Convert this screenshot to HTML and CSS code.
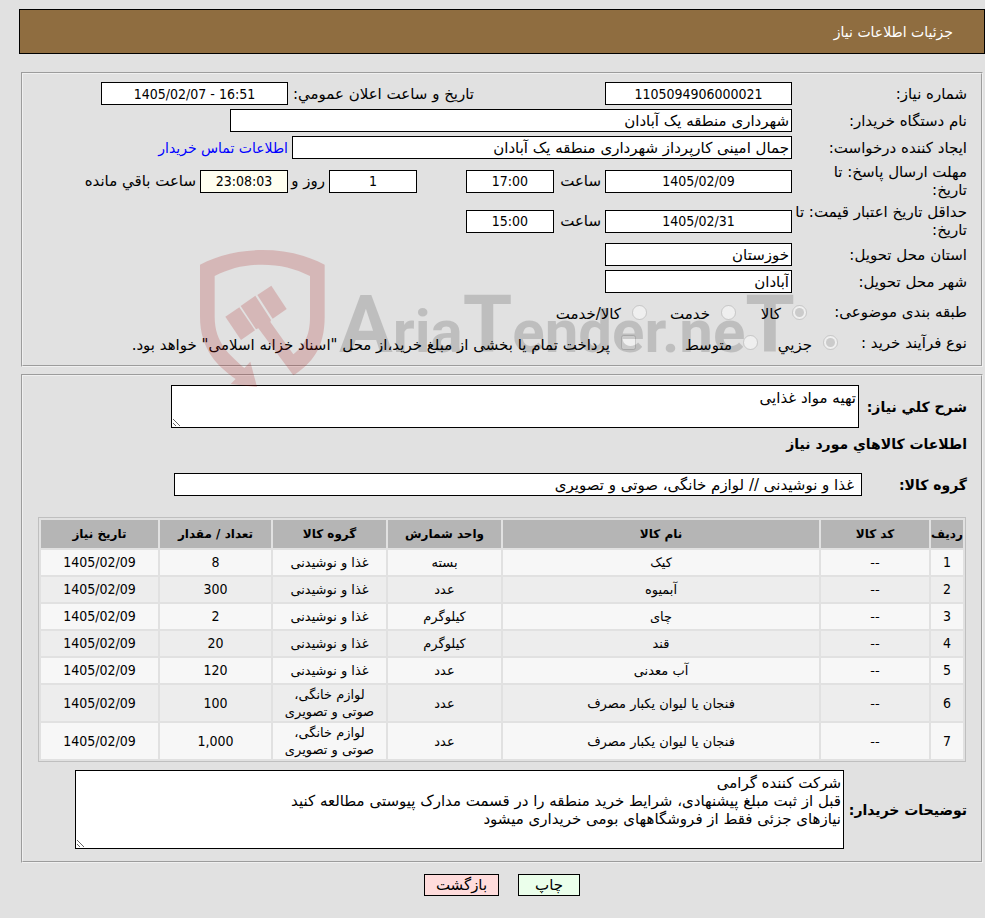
FILE: index.html
```html
<!DOCTYPE html>
<html lang="fa" dir="rtl">
<head>
    <meta charset="UTF-8">
    <title>جزئیات اطلاعات نیاز</title>
    <link rel="stylesheet" href="styles.css">
</head>
<body>
    <h1 class="header">جزئیات اطلاعات نیاز</h1>

    <form>
    <div class="panel info">
        <div class="row">
            <label class="title" for="reqNo">شماره نیاز:</label>
            <input class="box date" id="reqNo" type="text" value="1105094906000021" readonly>
            <label class="publicLabel" for="publicDate">تاریخ و ساعت اعلان عمومي:</label>
            <input class="box date" id="publicDate" type="text" dir="ltr" value="1405/02/07 - 16:51" readonly>
        </div>
        <div class="row">
            <label class="title" for="org">نام دستگاه خریدار:</label>
            <input class="box org" id="org" type="text" value="شهرداری منطقه یک آبادان" readonly>
        </div>
        <div class="row">
            <label class="title" for="creator">ایجاد کننده درخواست:</label>
            <input class="box creator" id="creator" type="text" value="جمال امینی کارپرداز شهرداری منطقه یک آبادان" readonly>
            <a class="contact" href="#">اطلاعات تماس خریدار</a>
        </div>
        <div class="row tall">
            <label class="title" for="replyDate">مهلت ارسال پاسخ: تا<br>تاریخ:</label>
            <input class="box date" id="replyDate" type="text" value="1405/02/09" readonly>
            <label class="hourLabel" for="replyHour">ساعت</label>
            <input class="box hour" id="replyHour" type="text" value="17:00" readonly>
            <input class="box hour days" id="days" type="text" value="1" readonly>
            <label class="dayLabel" for="days">روز و</label>
            <input class="box hour remain" id="remain" type="text" value="23:08:03" readonly>
            <label class="remainLabel" for="remain">ساعت باقي مانده</label>
        </div>
        <div class="row tall">
            <label class="title" for="priceDate">حداقل تاریخ اعتبار قیمت: تا<br>تاریخ:</label>
            <input class="box date" id="priceDate" type="text" value="1405/02/31" readonly>
            <label class="hourLabel" for="priceHour">ساعت</label>
            <input class="box hour" id="priceHour" type="text" value="15:00" readonly>
        </div>
        <div class="row">
            <label class="title" for="province">استان محل تحویل:</label>
            <input class="box place" id="province" type="text" value="خوزستان" readonly>
        </div>
        <div class="row">
            <label class="title" for="city">شهر محل تحویل:</label>
            <input class="box place" id="city" type="text" value="آبادان" readonly>
        </div>
        <div class="row options kind">
            <span class="title">طبقه بندی موضوعی:</span>
            <label class="option first"><input type="radio" name="kind" checked disabled><span>کالا</span></label>
            <label class="option second"><input type="radio" name="kind" disabled><span>خدمت</span></label>
            <label class="option"><input type="radio" name="kind" disabled><span>کالا/خدمت</span></label>
        </div>
        <div class="row options process">
            <span class="title">نوع فرآیند خرید :</span>
            <label class="option first"><input type="radio" name="process" checked disabled><span>جزیي</span></label>
            <label class="option second"><input type="radio" name="process" disabled><span>متوسط</span></label>
            <label class="option"><input type="checkbox" disabled><span>پرداخت تمام یا بخشی از مبلغ خرید،از محل "اسناد خزانه اسلامی" خواهد بود.</span></label>
        </div>

        <div class="watermark" dir="ltr" aria-hidden="true">
            <svg class="shield" viewBox="60 90 375 411">
                <path d="M60 134C120 104 180 90 247 90C315 90 375 104 434 134V290C434 385 395 430 340 466L235 325L228 328L182 258L226 227L273 300L271 306L340 403C372 375 390 350 390 290V168C345 145 300 134 247 134C195 134 150 145 104 168V290C104 370 150 405 193 444L211 425L231 501L152 492L167 477C115 440 60 390 60 290Z"/>
                <path d="M136 290L178 262L225 331L183 360Z"/>
                <path d="M232 225L274 197L320 267L278 296Z"/>
            </svg>
            <span class="brand"><span class="cap">A</span>ria<span class="cap">T</span>ender.ne<span class="cap">T</span></span>
        </div>
    </div>

    <div class="panel goods">
        <div class="line">
            <label class="strong summaryLabel" for="summary">شرح کلي نیاز:</label>
            <textarea class="box summary" id="summary" readonly>تهیه مواد غذایی</textarea>
        </div>
        <h2 class="strong">اطلاعات کالاهاي مورد نیاز</h2>
        <div class="line">
            <label class="strong groupLabel" for="group">گروه کالا:</label>
            <input class="box group" id="group" type="text" value="غذا و نوشیدنی // لوازم خانگی، صوتی و تصویری" readonly>
        </div>
        <table class="items">
            <colgroup>
                <col class="cRow"><col class="cCode"><col class="cName"><col class="cUnit"><col class="cUnit"><col class="cCount"><col class="cDate">
            </colgroup>
            <thead>
                <tr><th>ردیف</th><th>کد کالا</th><th>نام کالا</th><th>واحد شمارش</th><th>گروه کالا</th><th>تعداد / مقدار</th><th>تاریخ نیاز</th></tr>
            </thead>
            <tbody>
                <tr><td class="num">1</td><td>--</td><td>کیک</td><td>بسته</td><td>غذا و نوشیدنی</td><td class="num">8</td><td class="num">1405/02/09</td></tr>
                <tr><td class="num">2</td><td>--</td><td>آبمیوه</td><td>عدد</td><td>غذا و نوشیدنی</td><td class="num">300</td><td class="num">1405/02/09</td></tr>
                <tr><td class="num">3</td><td>--</td><td>چای</td><td>کیلوگرم</td><td>غذا و نوشیدنی</td><td class="num">2</td><td class="num">1405/02/09</td></tr>
                <tr><td class="num">4</td><td>--</td><td>قند</td><td>کیلوگرم</td><td>غذا و نوشیدنی</td><td class="num">20</td><td class="num">1405/02/09</td></tr>
                <tr><td class="num">5</td><td>--</td><td>آب معدنی</td><td>عدد</td><td>غذا و نوشیدنی</td><td class="num">120</td><td class="num">1405/02/09</td></tr>
                <tr><td class="num">6</td><td>--</td><td>فنجان یا لیوان یکبار مصرف</td><td>عدد</td><td>لوازم خانگی، صوتی و تصویری</td><td class="num">100</td><td class="num">1405/02/09</td></tr>
                <tr><td class="num">7</td><td>--</td><td>فنجان یا لیوان یکبار مصرف</td><td>عدد</td><td>لوازم خانگی، صوتی و تصویری</td><td class="num">1,000</td><td class="num">1405/02/09</td></tr>
            </tbody>
        </table>
        <div class="line">
            <label class="strong notesLabel" for="notes">توضیحات خریدار:</label>
            <textarea class="box notes" id="notes" readonly>شرکت کننده گرامی
قبل از ثبت مبلغ پیشنهادی، شرایط خرید منطقه را در قسمت مدارک پیوستی مطالعه کنید
نیازهای جزئی فقط از فروشگاههای بومی خریداری میشود</textarea>
        </div>
    </div>

    <div class="buttons">
        <button class="print" type="button">چاپ</button>
        <button class="back" type="button">بازگشت</button>
    </div>
    </form>
</body>
</html>
```
FILE: styles.css
```css
*{
    box-sizing: border-box;
}
body{
    margin: 0;
    padding: 9px 0 0 19px;
    background: #e1e1e1;
    color: #000;
    font-family: "DejaVu Sans", sans-serif;
    font-size: 15px;
    line-height: 18px;
}
input, textarea, button{
    font: inherit;
    color: inherit;
}
.header{
    margin: 0 0 18px;
    padding: 13px 31px 12px;
    border: 1px solid #000;
    background: #8f6d40;
    color: #fff;
    font-size: 14px;
    font-weight: normal;
}
.panel{
    margin: 0 2px 7px;
    border: 2px groove #f0f0f0;
}
.info{
    position: relative;
    padding: 6px 14px 9px;
}
.row{
    display: flex;
    align-items: center;
    height: 27px;
    white-space: nowrap;
}
.tall{
    height: 40px;
}
.title{
    flex: none;
    width: 175px;
}
.box{
    flex: none;
    height: 23px;
    margin: 0;
    padding: 0 2px;
    border: 1px solid #000;
    border-radius: 0;
    background: #fff;
}
.date, .hour, .num{
    font-family: "DejaVu Sans Condensed", "DejaVu Sans", sans-serif;
    font-size: 14px;
    text-align: center;
}
.date, .place{
    width: 187px;
}
.publicLabel{
    width: 186px;
    margin-right: 131px;
}
.org{
    width: 562px;
}
.creator{
    width: 500px;
}
.contact{
    margin-right: 4px;
    color: #00f;
    font-size: 14px;
    text-decoration: none;
}
.hour{
    width: 88px;
}
.days{
    margin-right: 49px;
}
.remain{
    background: #fffff0;
}
.hourLabel{
    width: 51px;
    padding-right: 4px;
}
.dayLabel{
    width: 41px;
    padding-right: 4px;
}
.remainLabel{
    padding-right: 4px;
}
.option{
    display: flex;
    align-items: center;
    gap: 11px;
}
.option input{
    width: 15px;
    height: 15px;
    margin: 0;
}
.option span{
    padding-top: 4px;
}
.kind{
    height: 34px;
}
.kind .title{
    width: 160px;
}
.kind .first{
    width: 71px;
}
.kind .second{
    width: 89px;
}
.process .title{
    width: 129px;
}
.process .first{
    width: 80px;
}
.process .second{
    width: 122px;
}

/* logo printed over the form */
.watermark{
    position: absolute;
    top: 176px;
    left: 177px;
    display: flex;
    gap: 14px;
    pointer-events: none;
}
.shield{
    width: 125px;
    height: 137px;
    fill: #aa1414;
    opacity: .2;
}
.brand{
    padding-top: 35px;
    color: #000;
    opacity: .15;
    font-family: Roboto, sans-serif;
    font-size: 60px;
    font-weight: bold;
    line-height: 94px;
    white-space: nowrap;
}
.cap{
    font-size: 80px;
    line-height: 0;
}

.goods{
    padding: 9px 14px 12px;
}
.line{
    display: flex;
    align-items: center;
}
.strong{
    flex: none;
    margin: 0;
    font-size: 14px;
    font-weight: bold;
}
h2.strong{
    padding: 7px 0 20px;
}
.summaryLabel{
    width: 108px;
}
.groupLabel{
    width: 105px;
}
.notesLabel{
    width: 123px;
}
.summary{
    width: 688px;
    height: 43px;
    padding: 3px 2px;
}
.group{
    width: 688px;
    padding: 0 7px;
}
.notes{
    width: 769px;
    height: 79px;
    padding: 3px 2px;
}
.items{
    width: calc(100% - 2px);
    margin: 21px 1px 8px;
    border: 1px solid #bfbfbf;
    border-spacing: 2px;
    table-layout: fixed;
    font-size: 13px;
    line-height: 17px;
    text-align: center;
}
.items th{
    height: 28px;
    padding: 0;
    background: #b5b5b5;
    font-size: 12px;
}
.items td{
    height: 25px;
    padding: 1px 8px;
    background: #f7f7f7;
}
.items td:first-child{
    padding: 1px 0;
}
.items tr:nth-child(even) td{
    background: #ededed;
}
.cRow{
    width: 32px;
}
.cCode{
    width: 108px;
}
.cUnit{
    width: 113px;
}
.cCount{
    width: 111px;
}
.cDate{
    width: 117px;
}
.buttons{
    display: flex;
    justify-content: center;
    gap: 19px;
    margin-top: 11px;
    padding-bottom: 23px;
}
.buttons button{
    height: 22px;
    padding: 0;
    border: 1px solid #000;
}
.print{
    width: 62px;
    background: #ebffeb;
}
.back{
    width: 75px;
    background: #ffdcdc;
}
```
